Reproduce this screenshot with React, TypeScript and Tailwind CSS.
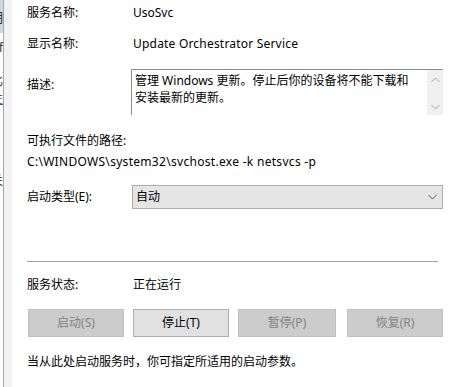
import React from "react";

const font = { fontFamily: '"Noto Sans", "Noto Sans CJK SC", sans-serif' };

function Chevron({ up, className }: { up?: boolean; className?: string }) {
  return (
    <svg width="9" height="6" viewBox="0 0 9 6" className={className}>
      <path
        d={up ? "M0.5 5 L4.5 1 L8.5 5" : "M0.5 1 L4.5 5 L8.5 1"}
        fill="none"
        stroke="currentColor"
        strokeWidth="1"
      />
    </svg>
  );
}

export default function App() {
  return (
    <div
      className="w-[459px] h-[387px] bg-white flex overflow-hidden text-[12px] leading-4 text-black"
      style={font}
    >
      {/* left edge from window behind */}
      <div className="w-[3px] flex flex-col bg-white">
        <div className="h-[33px] bg-[#cbd8e6] overflow-hidden flex justify-end items-center">
          <span className="whitespace-nowrap text-[13px] text-[#333]">期</span>
        </div>
        <div className="mt-[7px] h-[16px] overflow-hidden flex justify-end">
          <span className="whitespace-nowrap text-[#333]">ff</span>
        </div>
        <div className="mt-[17px] h-[16px] overflow-hidden flex justify-end">
          <span className="whitespace-nowrap text-[#333]">比</span>
        </div>
        <div className="mt-[2px] h-[16px] overflow-hidden flex justify-end">
          <span className="whitespace-nowrap text-[#1a5fb4] underline">性</span>
        </div>
        <div className="mt-[66px] h-[16px] overflow-hidden flex justify-end">
          <span className="whitespace-nowrap text-[#333]">关</span>
        </div>
      </div>
      <div className="w-px bg-[#a6a6a6]" />
      <div className="w-[8px] bg-[#f2f2f2]" />

      <div className="flex-1 flex flex-col pl-[15px]">
        <div className="mt-[5px] flex h-4">
          <div className="w-[106px]">服务名称:</div>
          <div>UsoSvc</div>
        </div>
        <div className="mt-[15px] flex h-4">
          <div className="w-[106px]">显示名称:</div>
          <div className="tracking-[0.2px]">Update Orchestrator Service</div>
        </div>
        <div className="mt-[17px] flex h-[46px]">
          <div className="w-[104px] pt-[8px]">描述:</div>
          <div className="w-[312px] flex border-t border-l border-[#8a8a8a]">
            <div className="flex-1 pl-[3px] pt-[2px] leading-[17px]">
              管理 Windows 更新。停止后你的设备将不能下载和
              <br />
              安装最新的更新。
            </div>
            <div className="w-[16px] bg-[#f0f0f0] flex flex-col items-center justify-between pt-[7px] pb-[5px] text-[#a6a6a6]">
              <Chevron up />
              <Chevron />
            </div>
          </div>
        </div>
        <div className="mt-[18px] h-4">可执行文件的路径:</div>
        <div className="mt-[5px] h-4 whitespace-nowrap tracking-[0.3px]">
          C:\WINDOWS\system32\svchost.exe -k netsvcs -p
        </div>
        <div className="mt-[15px] flex items-center h-[24px]">
          <div className="w-[105px]">启动类型(E):</div>
          <div className="w-[311px] h-[24px] bg-[#e5e5e5] border border-[#adadad] flex items-center justify-between pl-[3px] pr-[5px]">
            <span>自动</span>
            <Chevron className="text-[#555]" />
          </div>
        </div>
        <div className="mt-[52px] h-px w-[411px] bg-[#a0a0a0]" />
        <div className="mt-[15px] flex h-4">
          <div className="w-[106px]">服务状态:</div>
          <div>正在运行</div>
        </div>
        <div className="mt-[16px] flex h-[28px] pl-px">
          <div className="w-[96px] h-[28px] bg-[#cccccc] border border-[#bfbfbf] text-[#838383] flex items-center justify-center">
            启动(S)
          </div>
          <div className="ml-[9px] w-[96px] h-[28px] bg-[#e1e1e1] border border-[#adadad] flex items-center justify-center">
            停止(T)
          </div>
          <div className="ml-[9px] w-[98px] h-[28px] bg-[#cccccc] border border-[#bfbfbf] text-[#838383] flex items-center justify-center">
            暂停(P)
          </div>
          <div className="ml-[11px] w-[96px] h-[28px] bg-[#cccccc] border border-[#bfbfbf] text-[#838383] flex items-center justify-center">
            恢复(R)
          </div>
        </div>
        <div className="mt-[17px] h-4">当从此处启动服务时，你可指定所适用的启动参数。</div>
      </div>
    </div>
  );
}
